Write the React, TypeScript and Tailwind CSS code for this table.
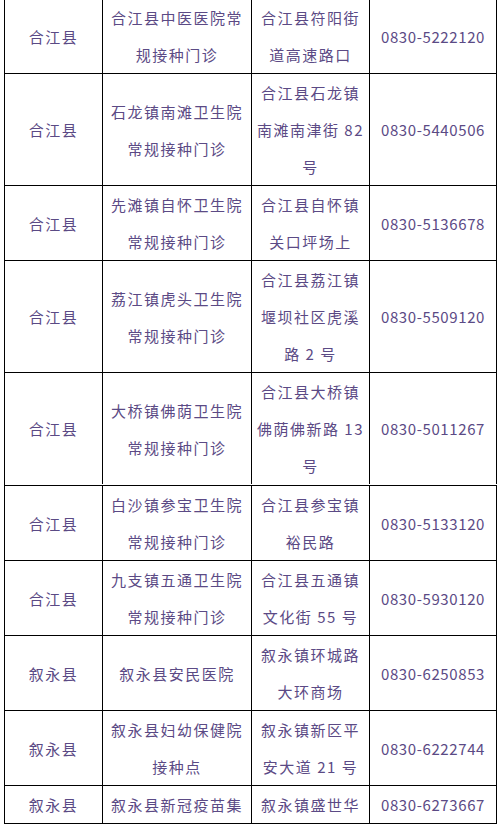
import React from "react";

type Row = {
  county: string;
  name: string[];
  address: string[];
  phone: string;
  extra?: boolean;
};

const rows: Row[] = [
  {
    county: "合江县",
    name: ["合江县中医医院常", "规接种门诊"],
    address: ["合江县符阳街", "道高速路口"],
    phone: "0830-5222120",
  },
  {
    county: "合江县",
    name: ["石龙镇南滩卫生院", "常规接种门诊"],
    address: ["合江县石龙镇", "南滩南津街 82", "号"],
    phone: "0830-5440506",
  },
  {
    county: "合江县",
    name: ["先滩镇自怀卫生院", "常规接种门诊"],
    address: ["合江县自怀镇", "关口坪场上"],
    phone: "0830-5136678",
  },
  {
    county: "合江县",
    name: ["荔江镇虎头卫生院", "常规接种门诊"],
    address: ["合江县荔江镇", "堰坝社区虎溪", "路 2 号"],
    phone: "0830-5509120",
  },
  {
    county: "合江县",
    name: ["大桥镇佛荫卫生院", "常规接种门诊"],
    address: ["合江县大桥镇", "佛荫佛新路 13", "号"],
    phone: "0830-5011267",
    extra: true,
  },
  {
    county: "合江县",
    name: ["白沙镇参宝卫生院", "常规接种门诊"],
    address: ["合江县参宝镇", "裕民路"],
    phone: "0830-5133120",
  },
  {
    county: "合江县",
    name: ["九支镇五通卫生院", "常规接种门诊"],
    address: ["合江县五通镇", "文化街 55 号"],
    phone: "0830-5930120",
  },
  {
    county: "叙永县",
    name: ["叙永县安民医院"],
    address: ["叙永镇环城路", "大环商场"],
    phone: "0830-6250853",
  },
  {
    county: "叙永县",
    name: ["叙永县妇幼保健院", "接种点"],
    address: ["叙永镇新区平", "安大道 21 号"],
    phone: "0830-6222744",
  },
  {
    county: "叙永县",
    name: ["叙永县新冠疫苗集"],
    address: ["叙永镇盛世华"],
    phone: "0830-6273667",
  },
];

const Cell = ({
  lines,
  className,
}: {
  lines: string[];
  className: string;
}) => (
  <div
    className={`flex flex-col items-center justify-center border-r border-black text-center ${className}`}>
    {lines.map((line) => (
      <div key={line} className="whitespace-nowrap">
        {line}
      </div>
    ))}
  </div>
);

export default function App() {
  return (
    <div className="min-h-screen bg-white">
      <div
        className="-mt-px ml-[4px] w-[493px] border-l border-black text-[15px] leading-[37px] tracking-[1.5px] text-[#5b4a85]"
        style={{ fontFamily: '"Noto Sans CJK SC", "Noto Sans", sans-serif' }}>
        {rows.map((row, i) => (
          <div
            key={i}
            className={`flex border-b border-black ${row.extra ? "pb-px" : ""}`}>
            <Cell lines={[row.county]} className="w-[98px]" />
            <Cell lines={row.name} className="w-[149px]" />
            <Cell lines={row.address} className="w-[118px]" />
            <Cell
              lines={[row.phone]}
              className="w-[127px] tracking-[0.6px]"
            />
          </div>
        ))}
      </div>
    </div>
  );
}
